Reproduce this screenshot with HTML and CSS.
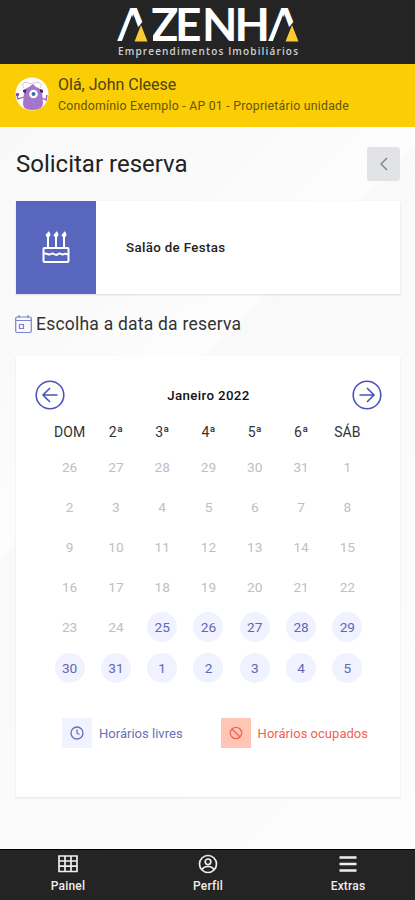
FILE: index.html
```html
<!DOCTYPE html>
<html lang="pt-BR">
<head>
    <meta charset="UTF-8">
    <meta name="viewport" content="width=device-width, initial-scale=1.0">
    <title>Solicitar reserva</title>
    <link rel="stylesheet" href="styles.css">
</head>
<body>

    <header class="topbar">
        <svg class="logo" width="190" height="60" viewBox="0 0 190 60">
            <text class="logo-name" y="41" x="4.500 37.500 62 89 121.500 155.500">AZENHA</text>
            <path fill="#242424" d="M19 15L8.500 42H40V22l-9-2-7 8.500zM170 15L159.500 42H190V22l-8-2-7 8.500z"/>
            <path fill="#fbc931" d="M28 25l-6.500 16.500h13zM179 25l-6.500 16.500h13z"/>
            <text class="logo-tag" x="5" y="54.500" textLength="180">Empreendimentos Imobiliários</text>
        </svg>
    </header>

    <section class="user">
        <svg class="avatar" width="34" height="34" viewBox="0 0 34 34">
            <circle cx="17" cy="17" r="16.500" fill="#fff"/>
            <path d="M9 11C5 5 11 4 16 7c6-3 13-2 9 4" fill="none" stroke="#cfc5d5"/>
            <path d="M9 20L3 22l-1-4M27 21l4 2 1-5" fill="none" stroke="#8b58ae" stroke-width="1.300"/>
            <circle cx="2.500" cy="17.500" r="1.700" fill="#86459f"/>
            <path d="M9 15q1-4 5-5l4-3 3 3q5 1 6 6l1 10q0 7-10 7T8 27z" fill="#a575cb"/>
            <path d="M8 13l3-1v4l-3-1zM25 12l3 1v3l-3-1z" fill="#4b2d56"/>
            <circle cx="18.500" cy="17" r="4.300" fill="#fff"/>
            <circle cx="18.500" cy="17" r="2" fill="#346eb0"/>
        </svg>
        <div>
            <div class="user-name">Olá, John Cleese</div>
            <div class="user-unit">Condomínio Exemplo - AP 01 - Proprietário unidade</div>
        </div>
    </section>

    <main class="content">
        <div class="title-row">
            <h1>Solicitar reserva</h1>
            <button class="back" aria-label="Voltar">
                <svg width="12" height="14" viewBox="0 0 12 14"><path d="M9 1L3 7l6 6"/></svg>
            </button>
        </div>

        <div class="place">
            <div class="place-icon">
                <svg width="28" height="34" viewBox="0 0 28 34">
                    <rect x="1.500" y="17" width="25" height="14" rx="1"/>
                    <path d="M6 17V5M14 17V5M22 17V5M2 23c3-2 4 2 7 0 3-2 4 3 7 0 3-2 4 2 6 0 2-1 3 1 4 0"/>
                    <path class="flame" d="M7 0l1.500 3.500q0 2.500-2.500 2.500T3.500 4zM15 0l1.500 3.500q0 2.500-2.500 2.500T11.500 4zM23 0l1.500 3.500q0 2.500-2.500 2.500T19.500 4z"/>
                </svg>
            </div>
            <div class="place-name">Salão de Festas</div>
        </div>

        <h2>
            <svg width="18" height="20" viewBox="0 0 18 20">
                <rect x=".7" y="3" width="15.600" height="15.500" rx="1.500"/>
                <path d="M1 6.500h15M4 1v3M13 1v3M4.500 10.500h4v4h-4z"/>
            </svg>
            <span>Escolha a data da reserva</span>
        </h2>

        <div class="calendar">
            <div class="month">
                <svg width="30" height="30" viewBox="0 0 30 30"><circle cx="15" cy="15" r="13.800"/><path d="M22.500 15H8M15 8l-7 7 7 7"/></svg>
                <span>Janeiro 2022</span>
                <svg width="30" height="30" viewBox="0 0 30 30"><circle cx="15" cy="15" r="13.800"/><path d="M7.500 15H22M15 8l7 7-7 7"/></svg>
            </div>

            <div class="weekdays">
                <span>DOM</span><span>2ª</span><span>3ª</span><span>4ª</span><span>5ª</span><span>6ª</span><span>SÁB</span>
            </div>

            <div class="days">
                <span>26</span><span>27</span><span>28</span><span>29</span><span>30</span><span>31</span><span>1</span>
                <span>2</span><span>3</span><span>4</span><span>5</span><span>6</span><span>7</span><span>8</span>
                <span>9</span><span>10</span><span>11</span><span>12</span><span>13</span><span>14</span><span>15</span>
                <span>16</span><span>17</span><span>18</span><span>19</span><span>20</span><span>21</span><span>22</span>
                <span>23</span><span>24</span><span class="free">25</span><span class="free">26</span><span class="free">27</span><span class="free">28</span><span class="free">29</span>
                <span class="free">30</span><span class="free">31</span><span class="free">1</span><span class="free">2</span><span class="free">3</span><span class="free">4</span><span class="free">5</span>
            </div>

            <div class="legend">
                <div class="legend-item">
                    <span class="legend-icon"><svg width="14" height="14" viewBox="0 0 14 14"><circle cx="7" cy="7" r="6"/><path d="M7 3.500V7l2.500 1.500"/></svg></span>
                    <span>Horários livres</span>
                </div>
                <div class="legend-item busy">
                    <span class="legend-icon"><svg width="14" height="14" viewBox="0 0 14 14"><circle cx="7" cy="7" r="5.700"/><path d="M3 3l8 8"/></svg></span>
                    <span>Horários ocupados</span>
                </div>
            </div>
        </div>
    </main>

    <nav class="bottom-nav">
        <a>
            <svg width="20" height="20" viewBox="0 0 20 20"><path d="M1 2h18v15.500H1zM1 7h18M1 12.200h18M7 2v15.500M13 2v15.500"/></svg>
            <span>Painel</span>
        </a>
        <a>
            <svg width="20" height="20" viewBox="0 0 20 20"><circle cx="10" cy="10" r="8.500"/><circle cx="10" cy="7.800" r="2.800"/><path d="M4 16c1-3 3-3.500 6-3.500s5 .5 6 3.500"/></svg>
            <span>Perfil</span>
        </a>
        <a>
            <svg class="menu" width="20" height="20" viewBox="0 0 20 20"><path d="M1.500 3.500h17M1.500 10h17M1.500 16.500h17"/></svg>
            <span>Extras</span>
        </a>
    </nav>

</body>
</html>
```
FILE: styles.css
```css
* {
    box-sizing: border-box;
}

body {
    margin: 0;
    height: 900px;
    display: flex;
    flex-direction: column;
    font-family: Roboto, sans-serif;
    color: #222;
    background: linear-gradient(135deg, #f8f8f8 0%, #fafafa 30%, #fdfdfd 42%, #f9f9f9 43%, #fbfbfb 70%, #fdfdfd 100%);
}

svg {
    display: block;
    flex-shrink: 0;
    fill: none;
}

.topbar {
    height: 64px;
    background: #242424;
    display: flex;
    justify-content: center;
}

.logo-name {
    font: 700 46px Lato, sans-serif;
    fill: #fff;
}

.logo-tag {
    font: 600 10px "Open Sans", sans-serif;
    fill: #d0d0d0;
}

.user {
    height: 63px;
    padding: 10px 15px 0;
    display: flex;
    gap: 9px;
    background: #fbcd05;
}

.avatar {
    margin-top: 3px;
}

.user-name {
    font-size: 16px;
    line-height: 22px;
    color: #4c4212;
}

.user-unit {
    font-size: 12.3px;
    line-height: 20px;
    letter-spacing: 0.24px;
    color: #66540a;
    white-space: nowrap;
}

.content {
    flex: 1;
    padding: 20px 15px 0 16px;
}

.title-row {
    display: flex;
    justify-content: space-between;
    align-items: center;
    height: 34px;
}

h1 {
    margin: 0;
    font-size: 24px;
    font-weight: 400;
}

.back {
    width: 33px;
    height: 34px;
    padding: 0;
    display: flex;
    align-items: center;
    justify-content: center;
    border: 0;
    border-radius: 3px;
    background: #e1e3e6;
}

.back svg {
    stroke: #777b80;
    stroke-width: 1.2;
}

.place {
    display: flex;
    align-items: center;
    height: 93px;
    margin-top: 20px;
    background: #fff;
    box-shadow: 0 1px 2px rgba(0, 0, 0, 0.12);
}

.place-icon {
    width: 80px;
    height: 93px;
    display: flex;
    align-items: center;
    justify-content: center;
    background: #5966bd;
}

.place-icon svg {
    stroke: #fff;
    stroke-width: 2;
}

.place-icon .flame {
    fill: #fff;
    stroke: none;
}

.place-name {
    margin-left: 30px;
    font-size: 13.3px;
    font-weight: 500;
    letter-spacing: 0.35px;
}

h2 {
    display: flex;
    align-items: center;
    gap: 3px;
    height: 24px;
    margin: 18px 0 20px -1px;
    font-size: 17.5px;
    font-weight: 400;
    letter-spacing: 0.22px;
    color: #333;
}

h2 svg {
    stroke: #7b83d0;
    stroke-width: 1.2;
}

.calendar {
    height: 441px;
    padding: 24px 18px 0 19px;
    background: #fff;
    box-shadow: 0 1px 2px rgba(0, 0, 0, 0.1);
}

.month {
    display: flex;
    align-items: center;
    justify-content: space-between;
    font-size: 13.3px;
    font-weight: 500;
    letter-spacing: 0.35px;
    color: #111;
}

.month svg {
    stroke: #4854bd;
    stroke-width: 1.6;
}

.weekdays,
.days {
    display: grid;
    grid-template-columns: repeat(7, 46.3px);
    justify-content: center;
    justify-items: center;
    align-items: center;
}

.weekdays {
    height: 24px;
    margin-top: 10px;
    font-size: 14px;
    color: #333;
}

.days {
    grid-auto-rows: 40.2px;
    margin-top: 2.5px;
    font-size: 13.7px;
    color: #c0c0c0;
}

.days span {
    width: 30px;
    height: 30px;
    line-height: 30px;
    text-align: center;
    border-radius: 50%;
}

.days .free {
    color: #6068b5;
    background: #f0f2ff;
}

.legend {
    display: flex;
    justify-content: space-between;
    margin: 30.5px 14px 0 27px;
    font-size: 13px;
    letter-spacing: 0.02px;
}

.legend-item {
    display: flex;
    align-items: center;
    gap: 7px;
    color: #6a70b8;
}

.legend-icon {
    width: 30px;
    height: 30px;
    display: flex;
    align-items: center;
    justify-content: center;
    background: #f0f2ff;
}

.legend-icon svg {
    stroke: currentColor;
    stroke-width: 1.3;
}

.busy {
    color: #f26350;
}

.busy .legend-icon {
    background: #ffc6b5;
}

.bottom-nav {
    height: 51px;
    display: flex;
    justify-content: space-between;
    padding: 0 42px 0 43px;
    border-top: 1px solid #000;
    background: #242424;
    color: #eee;
}

.bottom-nav a {
    width: 50px;
    display: flex;
    flex-direction: column;
    align-items: center;
    padding-top: 4px;
    font-size: 12px;
    font-weight: 500;
    letter-spacing: 0.2px;
    line-height: 24px;
}

.bottom-nav svg {
    stroke: #eee;
    stroke-width: 1.7;
}

.bottom-nav .menu {
    stroke-width: 2.3;
}
```
